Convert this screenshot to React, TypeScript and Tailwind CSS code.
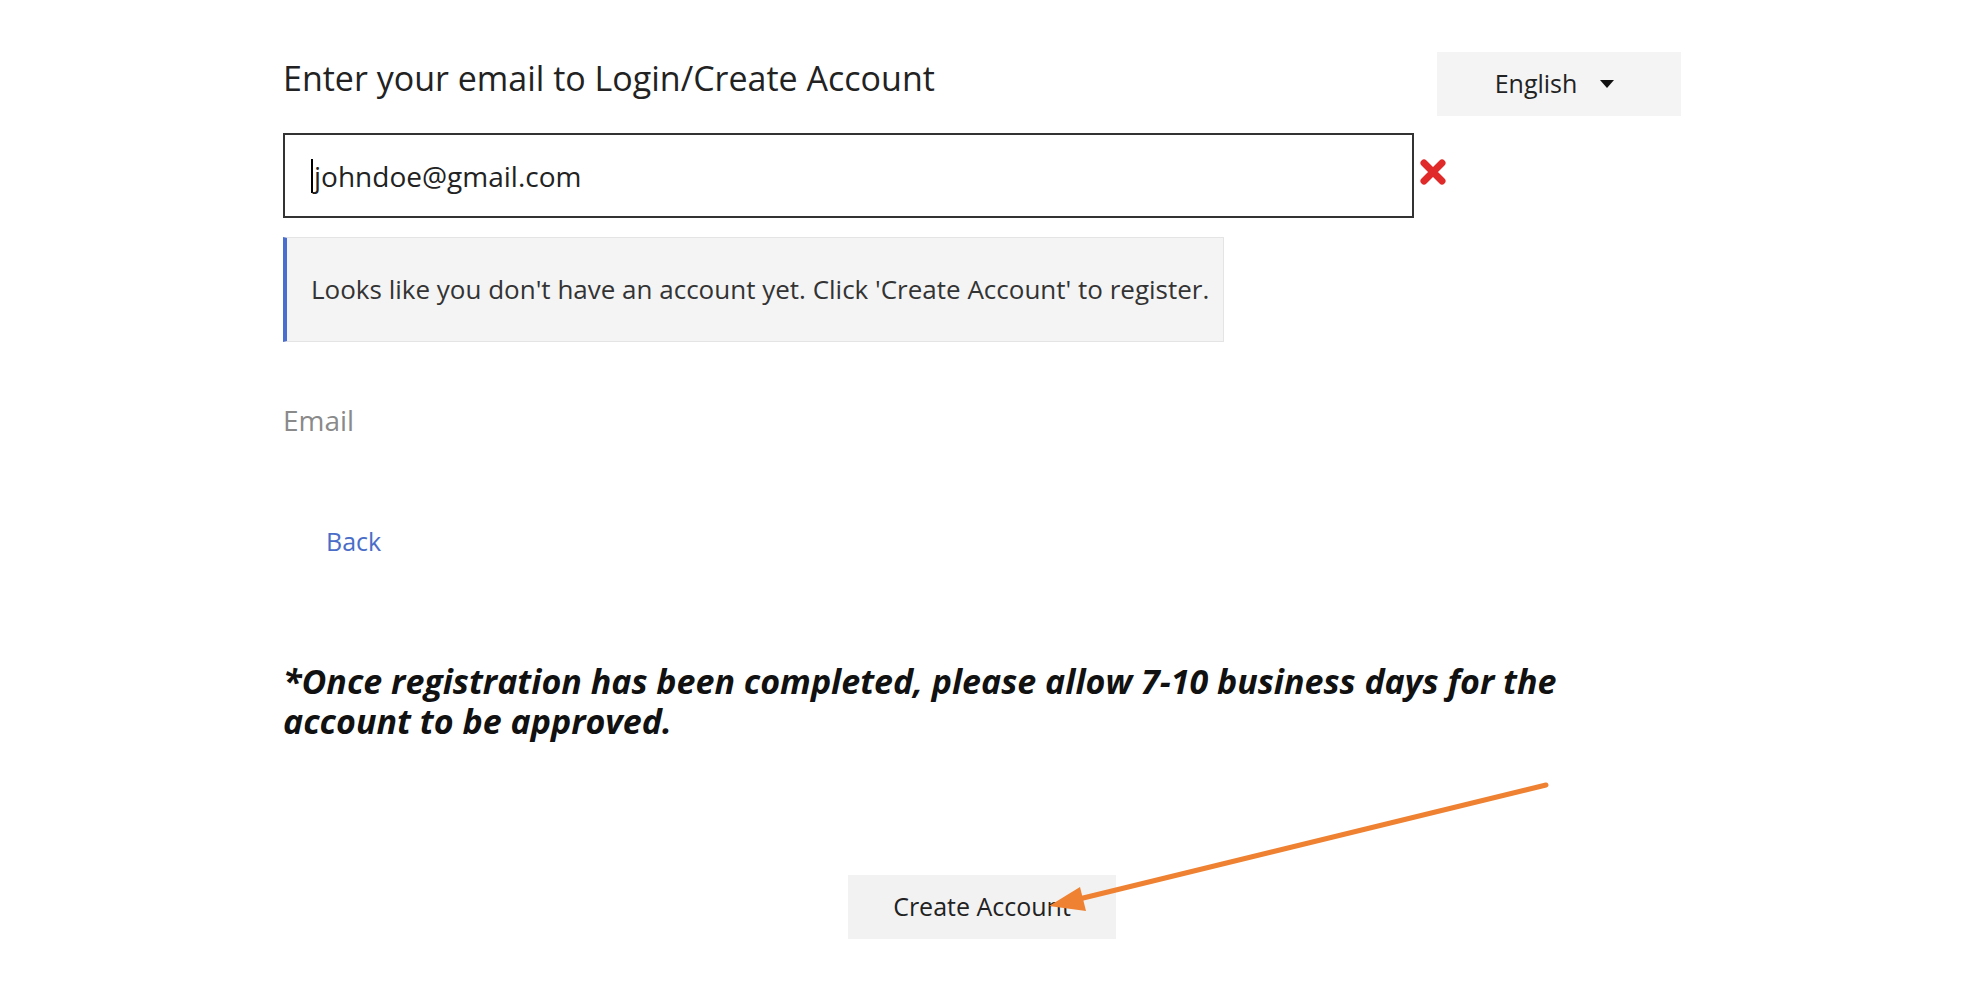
import React from "react";

export default function App() {
  return (
    <div className="relative w-[1973px] h-[985px] bg-white overflow-hidden" style={{ fontFamily: '"Open Sans", sans-serif' }}>
      <div className="ml-[283px] w-[1398px] pt-[52px]">
        <div className="flex justify-between items-start h-[64px]">
          <h1 className="text-[34px] leading-[52px] text-[#222] font-normal">Enter your email to Login/Create Account</h1>
          <div className="w-[244px] h-[64px] bg-[#f4f4f4] flex items-center justify-center gap-[22px] text-[25px] text-[#222] pr-[8px]">
            <span>English</span>
            <svg width="16" height="10" viewBox="0 0 16 10"><path d="M1 1 L15 1 L8 9 Z" fill="#111" /></svg>
          </div>
        </div>
        <div className="mt-[17px] flex items-center">
          <div className="w-[1131px] h-[85px] border-2 border-[#333] flex items-center pl-[26px] text-[28px] text-[#222]">
            <span className="w-[2px] h-[34px] bg-black mr-[1px]" />
            <span>johndoe@gmail.com</span>
          </div>
          <svg className="ml-[5px] mt-[-8px]" width="28" height="28" viewBox="0 0 28 28">
            <path d="M5 5 L23 23 M23 5 L5 23" stroke="#e02a2a" strokeWidth="7" strokeLinecap="round" />
          </svg>
        </div>
        <div className="mt-[19px] w-[941px] h-[105px] bg-[#f4f4f4] border border-[#e4e4e4] border-l-4 border-l-[#4a6dd0] flex items-center pl-[24px] text-[26px] text-[#333]">
          Looks like you don't have an account yet. Click 'Create Account' to register.
        </div>
        <div className="mt-[63px] text-[28px] leading-[30px] text-[#8a8a8a]">Email</div>
        <div className="mt-[91px] ml-[43px] text-[25px] leading-[30px] text-[#4a6dc8]">Back</div>
        <div className="mt-[105px] flex flex-col font-bold italic text-[34px] leading-[40px] text-[#111]">
          <span>*Once registration has been completed, please allow 7-10 business days for the</span>
          <span>account to be approved.</span>
        </div>
        <div className="mt-[134px] flex justify-center">
          <button className="w-[268px] h-[64px] bg-[#f2f2f2] text-[25px] text-[#222]">Create Account</button>
        </div>
      </div>
      <svg className="absolute left-0 top-0 pointer-events-none" width="1973" height="985">
        <line x1="1546" y1="785" x2="1075" y2="900" stroke="#ee8232" strokeWidth="5" strokeLinecap="round" />
        <path d="M1049 906 L1080 887 L1086 911 Z" fill="#ee8232" />
      </svg>
    </div>
  );
}
